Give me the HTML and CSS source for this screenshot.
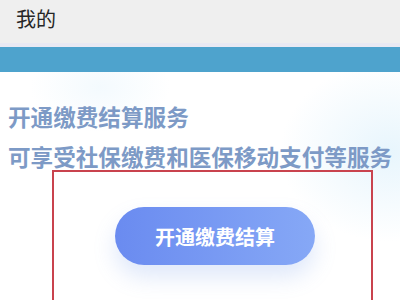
FILE: index.html
```html
<!DOCTYPE html>
<html lang="zh">
<head>
<meta charset="utf-8">
<link rel="stylesheet" href="styles.css">
</head>
<body>
<div class="page">
  <header class="topbar"><span class="title">我的</span></header>
  <div class="divider"></div>
  <div class="band"></div>
  <main class="content">
    <p class="line">开通缴费结算服务</p>
    <p class="line">可享受社保缴费和医保移动支付等服务</p>
    <div class="frame">
      <button class="cta">开通缴费结算</button>
    </div>
  </main>
</div>
</body>
</html>
```
FILE: styles.css
```css
html, body {
  margin: 0;
  padding: 0;
}
body {
  width: 400px;
  height: 300px;
  overflow: hidden;
  font-family: "Noto Sans CJK SC", "Noto Sans", sans-serif;
  background: #ffffff;
}
.page {
  width: 400px;
  height: 300px;
  overflow: hidden;
}
.topbar {
  height: 43px;
  background: #efefef;
  padding-left: 16px;
  box-sizing: border-box;
}
.title {
  display: block;
  line-height: 37px;
  font-size: 20px;
  color: #262626;
}
.divider {
  height: 4px;
  background: #e9e9f3;
}
.band {
  height: 25px;
  background: #4ea3cd;
}
.content {
  height: 228px;
  padding-top: 25px;
  box-sizing: border-box;
  background:
    radial-gradient(ellipse 110px 90px at 390px 80px, rgba(226, 243, 252, 0.8), rgba(255,255,255,0) 100%),
    radial-gradient(ellipse 70px 45px at 100px 15px, rgba(236, 247, 253, 0.6), rgba(255,255,255,0) 100%),
    #ffffff;
}
.line {
  margin: 0;
  padding-left: 8px;
  font-size: 22.6px;
  line-height: 40px;
  font-weight: 700;
  color: #7d9ac6;
  white-space: nowrap;
}
.frame {
  margin-top: -7px;
  margin-left: 52px;
  width: 321px;
  height: 200px;
  box-sizing: border-box;
  border: 2px solid #c9434e;
  padding-top: 35px;
  padding-left: 61px;
}
.cta {
  display: block;
  width: 200px;
  height: 58px;
  border: none;
  border-radius: 29px;
  background: linear-gradient(90deg, #6a8bf0 0%, #86a8f6 100%);
  box-shadow: 0 12px 22px rgba(110, 150, 230, 0.22);
  color: #ffffff;
  font-family: "Noto Sans CJK SC", "Noto Sans", sans-serif;
  font-size: 20px;
  font-weight: 700;
  padding: 0;
}
```
